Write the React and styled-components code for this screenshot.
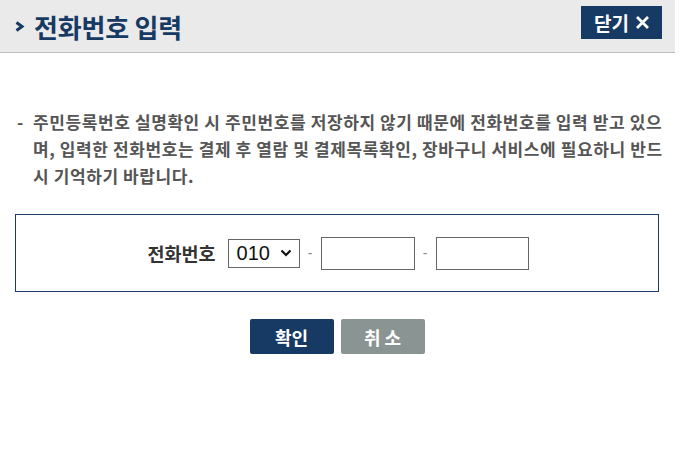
import React from 'react';
import styled, { createGlobalStyle } from 'styled-components';

const GlobalStyle = createGlobalStyle`
  body {
    margin: 0;
    background: #fff;
    font-family: 'Noto Sans CJK KR', 'Noto Sans', sans-serif;
  }
`;

const arrow =
  "url(\"data:image/svg+xml,%3Csvg xmlns='http://www.w3.org/2000/svg' width='12' height='8' viewBox='0 0 12 8'%3E%3Cpath d='M1.5 1.5 L6 6 L10.5 1.5' fill='none' stroke='%23111' stroke-width='2.2'/%3E%3C/svg%3E\")";

const Popup = styled.div`
  width: 675px;
`;

const Header = styled.div`
  display: flex;
  align-items: center;
  justify-content: space-between;
  height: 53px;
  padding: 0 13px 0 15px;
  background: #eaeaea;
  border-bottom: 1px solid #bdbdbd;
  box-sizing: border-box;
`;

const Title = styled.h1`
  display: flex;
  align-items: center;
  gap: 9px;
  margin: 0;
  font-size: 26px;
  font-weight: 700;
  color: #173a64;
  letter-spacing: -0.2px;
`;

const CloseButton = styled.button`
  display: flex;
  align-items: center;
  gap: 6px;
  height: 33px;
  padding: 0 12px 0 13px;
  margin-top: -8px;
  border: 0;
  background: #173a64;
  color: #fff;
  font-family: inherit;
  font-size: 19px;
  font-weight: 700;
  cursor: pointer;
`;

const Body = styled.div`
  padding: 55px 16px 0 15px;
`;

const Notice = styled.p`
  display: flex;
  margin: 0 0 25px;
  padding-left: 2px;
  font-size: 17px;
  font-weight: 700;
  line-height: 27px;
  color: #555;
  letter-spacing: 0.6px;
  white-space: nowrap;
`;

const Dash = styled.span`
  flex: none;
  width: 16px;
`;

const FormBox = styled.div`
  display: flex;
  align-items: center;
  justify-content: center;
  height: 78px;
  padding-left: 2px;
  border: 1px solid #1f3c60;
  box-sizing: border-box;
`;

const Label = styled.span`
  margin-right: 12px;
  font-size: 18.5px;
  font-weight: 700;
  color: #333;
`;

const Select = styled.select`
  appearance: none;
  width: 72px;
  height: 29px;
  padding: 0 0 0 8px;
  border: 1px solid #666;
  border-radius: 0;
  background: #fff ${arrow} no-repeat right 7px center;
  color: #111;
  font-family: 'Liberation Sans', Arial, sans-serif;
  font-size: 20px;
`;

const Sep = styled.span`
  width: 21px;
  text-align: center;
  font-family: 'Liberation Sans', Arial, sans-serif;
  font-size: 14px;
  color: #888;
`;

const PhoneInput = styled.input`
  width: ${(p) => p.$w}px;
  height: 33px;
  padding: 0 4px;
  border: 1px solid #666;
  box-sizing: border-box;
  font-size: 16px;
`;

const Actions = styled.div`
  display: flex;
  justify-content: center;
  gap: 7px;
  margin-top: 27px;
`;

const ActionButton = styled.button`
  width: 84px;
  height: 35px;
  border: 0;
  border-radius: 2px;
  background: ${(p) => (p.$muted ? '#8a9593' : '#173a64')};
  color: #fff;
  font-family: inherit;
  font-size: 18px;
  font-weight: 700;
  letter-spacing: ${(p) => (p.$muted ? '4px' : '0')};
  text-indent: ${(p) => (p.$muted ? '4px' : '0')};
  cursor: pointer;
`;

const Chevron = () => (
  <svg width="10" height="11" viewBox="0 0 10 11">
    <path d="M1.5 1.5 L7 5.5 L1.5 9.5" fill="none" stroke="#173a64" strokeWidth="3" />
  </svg>
);

const CloseX = () => (
  <svg width="15" height="15" viewBox="0 0 15 15">
    <path d="M2 2 L13 13 M13 2 L2 13" stroke="#fff" strokeWidth="2.8" />
  </svg>
);

export default function App() {
  return (
    <Popup>
      <GlobalStyle />
      <Header>
        <Title>
          <Chevron />
          전화번호 입력
        </Title>
        <CloseButton>
          닫기
          <CloseX />
        </CloseButton>
      </Header>
      <Body>
        <Notice>
          <Dash>-</Dash>
          <span>
            주민등록번호 실명확인 시 주민번호를 저장하지 않기 때문에 전화번호를 입력 받고 있으
            <br />
            며, 입력한 전화번호는 결제 후 열람 및 결제목록확인, 장바구니 서비스에 필요하니 반드
            <br />
            시 기억하기 바랍니다.
          </span>
        </Notice>
        <FormBox>
          <Label>전화번호</Label>
          <Select defaultValue="010">
            <option>010</option>
            <option>011</option>
            <option>016</option>
            <option>017</option>
            <option>018</option>
            <option>019</option>
          </Select>
          <Sep>-</Sep>
          <PhoneInput $w={94} />
          <Sep>-</Sep>
          <PhoneInput $w={93} />
        </FormBox>
        <Actions>
          <ActionButton>확인</ActionButton>
          <ActionButton $muted>취소</ActionButton>
        </Actions>
      </Body>
    </Popup>
  );
}
